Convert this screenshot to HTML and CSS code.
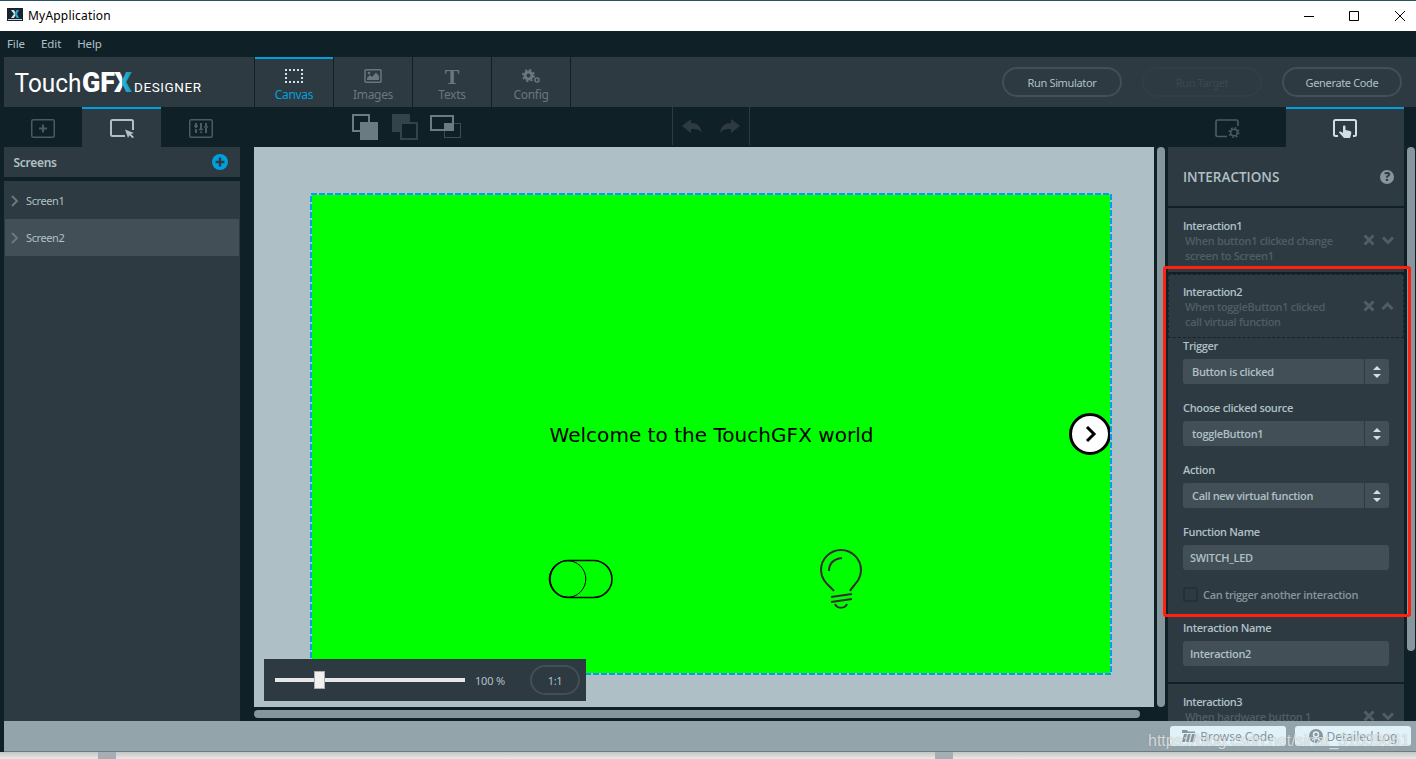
FILE: index.html
```html
<!DOCTYPE html>
<html lang="en">
<head>
    <meta charset="UTF-8">
    <meta name="viewport" content="width=device-width, initial-scale=1.0">
    <title>MyApplication</title>
    <link rel="stylesheet" href="styles.css">
</head>
<body>
    <div class="window">
        <header class="titlebar">
            <svg class="app-icon" width="16" height="15" viewBox="0 0 16 15">
                <rect width="16" height="13" fill="#14252d"/>
                <path d="M1 11.5h14" stroke="#c9d5da"/>
                <path d="M4 2l3 4-3 4h3l2-4-2-4z" fill="#dce5e8"/>
                <path d="M12 2H9.500L7.500 6l2 4H12L10 6z" fill="#2aa5cc"/>
            </svg>
            <span class="app-title">MyApplication</span>
            <svg class="window-buttons" width="104" height="12" viewBox="0 0 104 12" fill="none" stroke="#000">
                <path d="M0 6.500h10M45.500 1.500h9v9h-9zM91 1l10 10M101 1L91 11"/>
            </svg>
        </header>

        <nav class="menu">
            <span>File</span>
            <span>Edit</span>
            <span>Help</span>
        </nav>

        <div class="toolbar">
            <div class="logo">
                <svg width="200" height="50" viewBox="0 0 200 50">
                    <defs>
                        <linearGradient id="logoX" x1="0" x2="1" y1="0" y2="0">
                            <stop offset="0.45" stop-color="#fff"/>
                            <stop offset="0.45" stop-color="#2db4d8"/>
                            <stop offset="1" stop-color="#1594b8"/>
                        </linearGradient>
                    </defs>
                    <text class="logo-light" x="10.500" y="35" textLength="67" lengthAdjust="spacingAndGlyphs">Touch</text>
                    <text class="logo-bold" x="78" y="35" textLength="33" lengthAdjust="spacingAndGlyphs">GF</text>
                    <text class="logo-bold" x="110" y="35" textLength="18" lengthAdjust="spacingAndGlyphs" fill="url(#logoX)">X</text>
                    <text class="logo-small" x="130" y="35" textLength="67">DESIGNER</text>
                </svg>
            </div>
            <div class="tab active">
                <svg width="18" height="14" viewBox="0 0 18 14" fill="none" stroke="#d5e3e9" stroke-width="2" stroke-dasharray="2 2">
                    <path d="M0 1h18M0 13h18M1 4v8M17 4v8"/>
                </svg>
                <span>Canvas</span>
            </div>
            <div class="tab">
                <svg width="18" height="14" viewBox="0 0 18 14">
                    <rect x="1" y=".75" width="16" height="12.500" rx="1" fill="none" stroke="#69777e" stroke-width="1.500"/>
                    <path d="M3 11V9l3-3 2 2 4-4.500L15 7v4z" fill="#69777e"/>
                    <circle cx="5" cy="4" r="1.300" fill="#69777e"/>
                </svg>
                <span>Images</span>
            </div>
            <div class="tab">
                <span class="glyph-t">T</span>
                <span>Texts</span>
            </div>
            <div class="tab">
                <svg width="18" height="14" viewBox="0 0 18 14" fill="none" stroke="#69777e">
                    <circle cx="6.500" cy="6.500" r="3.500" stroke-width="3"/>
                    <circle cx="6.500" cy="6.500" r="5.600" stroke-width="1.800" stroke-dasharray="2.200 2.200"/>
                    <circle cx="15" cy="11" r="2" stroke-width="1.600"/>
                </svg>
                <span>Config</span>
            </div>
            <div class="actions">
                <button>Run Simulator</button>
                <button class="disabled">Run Target</button>
                <button>Generate Code</button>
            </div>
        </div>

        <div class="subbar">
            <div class="panel-tabs left">
                <div class="panel-tab">
                    <svg width="24" height="19" viewBox="0 0 24 19" fill="none" stroke="#4c5b62">
                        <rect x=".75" y=".75" width="22.500" height="17.500" rx="1.500" stroke-width="1.500"/>
                        <path d="M8 9.500h8M12 5.500v8" stroke-width="2"/>
                    </svg>
                </div>
                <div class="panel-tab active">
                    <svg width="24" height="19" viewBox="0 0 24 19">
                        <path d="M15 17H2.500A1.500 1.500 0 0 1 1 15.500V2.500A1.500 1.500 0 0 1 2.500 1h19A1.500 1.500 0 0 1 23 2.500V11" fill="none" stroke="#b0c0c7" stroke-width="2"/>
                        <path d="M15 10.500l9 3.500-3 1 3 3-1.500 1.300-3-3-1.500 2.700z" fill="#b0c0c7"/>
                    </svg>
                </div>
                <div class="panel-tab">
                    <svg width="24" height="19" viewBox="0 0 24 19" fill="none" stroke="#4c5b62">
                        <rect x=".75" y=".75" width="22.500" height="17.500" rx="1.500" stroke-width="1.500"/>
                        <path d="M7 4v5M7 10v4M12 4v7M12 12.500v1.500M17 4v3.500M17 9v5" stroke-width="2"/>
                        <path d="M5 7h4M10 10.500h4M15 8h4" stroke-width="1.500"/>
                    </svg>
                </div>
            </div>
            <div class="edit-tools">
                <svg width="26" height="26" viewBox="0 0 26 26">
                    <rect x="1" y="1" width="16" height="16" fill="none" stroke="#6b7b83" stroke-width="2"/>
                    <rect x="8" y="8" width="18" height="18" fill="#6b7b83"/>
                </svg>
                <svg width="26" height="26" viewBox="0 0 26 26">
                    <rect width="18" height="18" fill="#33434a"/>
                    <rect x="9" y="9" width="16" height="16" fill="#102027" stroke="#33434a" stroke-width="2"/>
                </svg>
                <svg width="32" height="26" viewBox="0 0 32 26">
                    <rect x="1" y="2" width="22" height="14" fill="none" stroke="#6b7b83" stroke-width="2"/>
                    <rect x="14" y="9" width="9" height="7" fill="#6b7b83"/>
                    <rect x="14.500" y="9.500" width="16" height="14" fill="none" stroke="#6b7b83" stroke-dasharray="1 1"/>
                </svg>
            </div>
            <div class="history">
                <svg width="20" height="15" viewBox="0 0 20 15"><path d="M0 7L9 0v4c6 0 10 3 11 10-3-4-6-4-11-4v4z"/></svg>
                <svg width="20" height="15" viewBox="0 0 20 15"><path d="M20 7L11 0v4C5 4 1 7 0 14c3-4 6-4 11-4v4z"/></svg>
            </div>
            <div class="panel-tabs right">
                <div class="panel-tab">
                    <svg width="25" height="19" viewBox="0 0 25 19" fill="none" stroke="#4c5b62">
                        <path d="M12 17.500H2.500A1.500 1.500 0 0 1 1 16V2.500A1.500 1.500 0 0 1 2.500 1h19A1.500 1.500 0 0 1 23 2.500V7" stroke-width="1.700"/>
                        <circle cx="19" cy="13.500" r="3.300" stroke-width="1.500"/>
                        <circle cx="19" cy="13.500" r="4.800" stroke-width="1.500" stroke-dasharray="1.900 1.870"/>
                    </svg>
                </div>
                <div class="panel-tab active">
                    <svg width="24" height="19" viewBox="0 0 24 19">
                        <path d="M5 17H2.500A1.500 1.500 0 0 1 1 15.500V2.500A1.500 1.500 0 0 1 2.500 1h19A1.500 1.500 0 0 1 23 2.500v13a1.500 1.500 0 0 1-1.500 1.500H20" fill="none" stroke="#d0dfe5" stroke-width="2"/>
                        <path d="M10 7.500c0-1.500 2.500-1.500 2.500 0V11l4.500 1c1.500.4 1.500 2 1 3.500L17 19h-6l-5-5.500c.5-1.500 2-1 4 .5z" fill="#d0dfe5"/>
                    </svg>
                </div>
            </div>
        </div>

        <main class="workspace">
            <aside class="screens">
                <div class="screens-header">
                    <h2>Screens</h2>
                    <svg width="16" height="16" viewBox="0 0 16 16">
                        <circle cx="8" cy="8" r="8" fill="#00a0df"/>
                        <path d="M3.500 8h9M8 3.500v9" stroke="#2d3a41" stroke-width="2.400"/>
                    </svg>
                </div>
                <div class="screen-list">
                    <div class="screen-item">
                        <svg width="8" height="12" viewBox="0 0 8 12"><path d="M1 1l5 5-5 5"/></svg>
                        <span>Screen1</span>
                    </div>
                    <div class="screen-item selected">
                        <svg width="8" height="12" viewBox="0 0 8 12"><path d="M1 1l5 5-5 5"/></svg>
                        <span>Screen2</span>
                    </div>
                </div>
            </aside>

            <section class="editor">
                <div class="canvas">
                    <svg class="design" width="802" height="482" viewBox="0 0 802 482">
                        <rect width="802" height="482" fill="#0f0"/>
                        <text class="welcome" x="239.500" y="248.500" textLength="324">Welcome to the TouchGFX world</text>
                        <!-- toggle button -->
                        <g fill="none" stroke="#000">
                            <rect x="240" y="367.500" width="62" height="37" rx="18.500" stroke-width="1.600"/>
                            <circle cx="257.500" cy="386" r="18.300"/>
                        </g>
                        <!-- bulb -->
                        <g fill="none" stroke="#3a2b33" stroke-width="2">
                            <path d="M524 398c-4-5-13-10-13-21a20 20 0 0 1 40 0c0 11-8 15-11 21"/>
                            <path d="M519 378c0-8 5-12 13-13M521 404l21-3M521 409l21-3M525 411c2 5 10 5 12 0"/>
                        </g>
                        <circle cx="780" cy="241" r="19.500" fill="#fff" stroke="#000" stroke-width="3"/>
                        <path d="M777 234l7 7-7 7" fill="none" stroke="#000" stroke-width="3"/>
                        <rect x="1" y="1" width="800" height="480" fill="none" stroke="#b0c0c7" stroke-width="2"/>
                        <rect x="1" y="1" width="800" height="480" fill="none" stroke="#00a0f0" stroke-width="2" stroke-dasharray="6 2"/>
                    </svg>
                    <div class="zoom-box">
                        <div class="slider"><div class="thumb"></div></div>
                        <span class="percent">100 %</span>
                        <button>1:1</button>
                    </div>
                </div>
                <div class="scroll-h"></div>
            </section>
            <div class="scroll-v"></div>

            <aside class="interactions">
                <div class="interactions-header">
                    <h1>INTERACTIONS</h1>
                    <span class="help">?</span>
                </div>
                <div class="interaction">
                    <div class="summary">
                        <div>
                            <h3>Interaction1</h3>
                            <p>When button1 clicked change<br>screen to Screen1</p>
                        </div>
                        <svg width="32" height="12" viewBox="0 0 32 12"><path d="M1.500 1.500l9 9M10.500 1.500l-9 9M20 3.500l5 5 5-5"/></svg>
                    </div>
                </div>
                <div class="interaction">
                    <div class="summary open">
                        <div>
                            <h3>Interaction2</h3>
                            <p>When toggleButton1 clicked<br>call virtual function</p>
                        </div>
                        <svg width="32" height="12" viewBox="0 0 32 12"><path d="M1.500 1.500l9 9M10.500 1.500l-9 9M19.500 9l5-5 5 5"/></svg>
                    </div>
                    <div class="form">
                        <label>Trigger</label>
                        <div class="select">
                            <span>Button is clicked</span>
                            <svg width="8" height="12" viewBox="0 0 8 12"><path d="M0 4l4-4 4 4zM0 8l4 4 4-4z"/></svg>
                        </div>
                        <label>Choose clicked source</label>
                        <div class="select">
                            <span>toggleButton1</span>
                            <svg width="8" height="12" viewBox="0 0 8 12"><path d="M0 4l4-4 4 4zM0 8l4 4 4-4z"/></svg>
                        </div>
                        <label>Action</label>
                        <div class="select">
                            <span>Call new virtual function</span>
                            <svg width="8" height="12" viewBox="0 0 8 12"><path d="M0 4l4-4 4 4zM0 8l4 4 4-4z"/></svg>
                        </div>
                        <label>Function Name</label>
                        <div class="field">SWITCH_LED</div>
                        <div class="check"><i></i><span>Can trigger another interaction</span></div>
                        <label>Interaction Name</label>
                        <div class="field">Interaction2</div>
                    </div>
                </div>
                <div class="interaction">
                    <div class="summary">
                        <div>
                            <h3>Interaction3</h3>
                            <p>When hardware button 1</p>
                        </div>
                        <svg width="32" height="12" viewBox="0 0 32 12"><path d="M1.500 1.500l9 9M10.500 1.500l-9 9M20 3.500l5 5 5-5"/></svg>
                    </div>
                </div>
            </aside>
            <div class="scroll-v short"></div>
        </main>

        <footer class="statusbar">
            <div class="status-btn">
                <svg width="14" height="12" viewBox="0 0 14 12" fill="#87959c">
                    <path d="M0 0h5l1 1.500h7V3H0zM2 4h3L3 12H0zM6 4h3l-2 8H4zM10 4h4l-2 8H8z"/>
                </svg>
                <span>Browse Code</span>
            </div>
            <div class="status-btn">
                <svg width="14" height="14" viewBox="0 0 14 14">
                    <circle cx="7" cy="7" r="7" fill="#87959c"/>
                    <circle cx="7" cy="5.500" r="2.500" fill="none" stroke="#e2f2f9" stroke-width="1.500"/>
                    <path d="M3 11c2-2 6-2 8 0" fill="none" stroke="#e2f2f9" stroke-width="1.300"/>
                </svg>
                <span>Detailed Log</span>
            </div>
        </footer>
        <div class="desktop"><i></i><i></i></div>

        <div class="highlight"></div>
        <div class="watermark">https://blog.csdn.net/sinat_31039061</div>
    </div>
</body>
</html>
```
FILE: styles.css
```css
* {
    box-sizing: border-box;
    margin: 0;
    padding: 0;
}

body {
    width: 1416px;
    height: 759px;
    overflow: hidden;
    background-color: #102027;
    color: #b0c0c7;
    font-family: "Noto Sans", sans-serif;
    font-size: 11px;
}

svg {
    display: block;
    flex-shrink: 0;
}

button {
    font-family: inherit;
    font-size: 11px;
    letter-spacing: -0.35px;
    color: #b0c0c7;
    background: none;
    border: 2px solid #424f56;
    border-radius: 15px;
    height: 30px;
}

.window {
    position: relative;
    display: flex;
    flex-direction: column;
    height: 759px;
}

/* title and menu */
.titlebar {
    display: flex;
    align-items: center;
    height: 31px;
    padding: 0 8px 1px 7px;
    background-color: #fff;
    border-top: 1px solid #2b5262;
}

.app-title {
    margin-left: 5px;
    font-size: 12px;
    letter-spacing: 0.2px;
    color: #000;
}

.window-buttons {
    margin-left: auto;
}

.menu {
    display: flex;
    align-items: center;
    gap: 16px;
    height: 26px;
    padding: 0 0 2px 7px;
    font-size: 11.5px;
    letter-spacing: -0.1px;
}

/* toolbar */
.toolbar {
    display: flex;
    gap: 1px;
    height: 50px;
    margin-left: 4px;
}

.logo {
    width: 250px;
    background-color: #2d3a41;
}

.logo text {
    font-family: Roboto, sans-serif;
    fill: #fff;
}

.logo .logo-light {
    font-size: 26px;
}

.logo .logo-bold {
    font-size: 27px;
    font-weight: 900;
}

.logo .logo-bold[fill] {
    fill: url(#logoX);
}

.logo .logo-small {
    font-size: 13.5px;
}

.tab {
    display: flex;
    flex-direction: column;
    align-items: center;
    width: 78px;
    padding-top: 12px;
    background-color: #2d3a41;
    color: #69777e;
    font-size: 12px;
    letter-spacing: -0.3px;
    line-height: 16px;
}

.tab svg {
    margin-bottom: 4px;
}

.tab.active {
    padding-top: 10px;
    border-top: 2px solid #00a0df;
    color: #00a0df;
}

.glyph-t {
    height: 18px;
    font-family: "Liberation Serif", serif;
    font-size: 22px;
    font-weight: bold;
    line-height: 15px;
}

.actions {
    flex: 1;
    display: flex;
    align-items: center;
    justify-content: flex-end;
    gap: 20px;
    padding-right: 14px;
    background-color: #2d3a41;
}

.actions button {
    width: 120px;
}

.actions .disabled {
    color: #394950;
    border-color: #303e45;
}

/* second bar */
.subbar {
    display: flex;
    height: 40px;
    padding-left: 4px;
}

.panel-tabs {
    display: flex;
    width: 236px;
}

.panel-tabs.right {
    margin-left: auto;
    margin-right: 12px;
}

.panel-tab {
    flex: 1;
    display: flex;
    justify-content: center;
    padding-top: 12px;
}

.panel-tab.active {
    padding-top: 10px;
    background-color: #2d3a41;
    border-top: 2px solid #00a0df;
}

.left .panel-tab:first-child {
    flex: 0 0 78px;
}

.edit-tools {
    display: flex;
    gap: 14px;
    width: 320px;
    margin-left: 112px;
    padding-top: 7px;
}

.edit-tools svg:last-child {
    margin-left: -2px;
}

.history {
    display: flex;
    gap: 18px;
    width: 78px;
    height: 38px;
    padding: 12px 0 0 9px;
    border-left: 1px solid #2d3a41;
    border-right: 1px solid #2d3a41;
}

.history svg {
    fill: #2d3a41;
}

/* workspace */
.workspace {
    display: flex;
    height: 574px;
    padding-left: 4px;
    overflow: hidden;
}

.workspace > * {
    flex-shrink: 0;
}

.screens {
    display: flex;
    flex-direction: column;
    width: 236px;
}

.screens-header {
    display: flex;
    align-items: center;
    justify-content: space-between;
    height: 30px;
    margin-bottom: 4px;
    padding: 0 12px 0 9.5px;
    background-color: #2d3a41;
}

.screens-header h2 {
    font-size: 12px;
    font-weight: 600;
    letter-spacing: -0.3px;
}

.screen-list {
    flex: 1;
    padding: 1px;
    background-color: #2d3a41;
}

.screen-item {
    display: flex;
    align-items: center;
    gap: 7px;
    height: 37px;
    padding-left: 6px;
    letter-spacing: -0.4px;
}

.screen-item.selected {
    background-color: #424f56;
}

.screen-item path {
    fill: none;
    stroke: #69777e;
    stroke-width: 2;
}

.editor {
    width: 900px;
    margin-left: 14px;
}

.canvas {
    position: relative;
    height: 560px;
    padding: 46px 0 0 56px;
    background-color: #afbfc6;
}

.welcome {
    font-family: "DejaVu Sans", sans-serif;
    font-size: 20px;
}

.zoom-box {
    position: absolute;
    left: 10px;
    bottom: 6px;
    display: flex;
    align-items: center;
    width: 322px;
    height: 42px;
    padding: 0 6px 0 11px;
    background-color: #2d3a41;
}

.zoom-box button {
    width: 50px;
    margin-left: auto;
}

.slider {
    display: flex;
    align-items: center;
    width: 190px;
    height: 4px;
    padding-left: 39px;
    background-color: #e7e7e7;
}

.thumb {
    width: 11px;
    height: 18px;
    flex-shrink: 0;
    background-color: #f0f0f0;
    border: 1px solid #acacac;
}

.percent {
    margin-left: 10px;
    letter-spacing: -0.2px;
}

.scroll-h {
    width: 886px;
    height: 8px;
    margin-top: 3px;
    border-radius: 4px;
    background-color: #87959c;
}

.scroll-v {
    width: 8px;
    height: 560px;
    margin: 0 3px;
    border-radius: 4px;
    background-color: #87959c;
}

.scroll-v.short {
    height: 504px;
}

/* interactions panel */
.interactions {
    display: flex;
    flex-direction: column;
    gap: 2px;
    width: 236px;
    font-family: "Open Sans", "Noto Sans", sans-serif;
    font-weight: 600;
    letter-spacing: -0.33px;
}

.interactions-header {
    display: flex;
    align-items: center;
    justify-content: space-between;
    flex-shrink: 0;
    height: 59px;
    padding: 0 10px 0 15px;
    background-color: #2d3a41;
}

.interactions-header h1 {
    font-size: 13.5px;
    font-weight: 600;
    letter-spacing: 0;
}

.help {
    width: 14px;
    height: 14px;
    border-radius: 50%;
    background-color: #87959c;
    color: #2d3a41;
    font-size: 12px;
    font-weight: 800;
    line-height: 14px;
    text-align: center;
}

.interaction {
    flex-shrink: 0;
    background-color: #2d3a41;
}

.summary {
    display: flex;
    justify-content: space-between;
    height: 64px;
    padding: 9px 9px 0 14px;
    border: 1px solid transparent;
    line-height: 15px;
}

.summary.open {
    border: 1px dashed #14242b;
}

.summary h3 {
    font-size: 11px;
    font-weight: 600;
    letter-spacing: -0.5px;
}

.summary p {
    padding-left: 2px;
    color: #4f5e65;
}

.summary svg {
    margin: 16px -1px 0 0;
}

.summary path {
    fill: none;
    stroke: #4f5e65;
    stroke-width: 3;
}

.form {
    height: 344px;
    padding: 0 15px;
}

.form label {
    display: block;
    line-height: 15px;
    margin-bottom: 6px;
}

.select, .field {
    height: 25px;
    margin-bottom: 16px;
    border-radius: 3px;
    background-color: #424f56;
    line-height: 25px;
}

.field {
    padding-left: 7px;
}

.select {
    display: flex;
    align-items: center;
    padding: 0 8px 0 9px;
    background: linear-gradient(to right, #424f56 181px, #2d3a41 181px, #2d3a41 182px, #424f56 182px);
}

.select svg {
    margin-left: auto;
    fill: #d0dfe5;
}

.check {
    display: flex;
    align-items: center;
    gap: 5px;
    height: 15px;
    margin: 17px 0 18px;
    color: #87959c;
}

.check i {
    width: 15px;
    height: 15px;
    border: 2px solid #233138;
    border-radius: 2px;
}

/* bottom */
.statusbar {
    display: flex;
    align-items: flex-start;
    justify-content: flex-end;
    gap: 9px;
    height: 31px;
    margin-left: 4px;
    padding: 5px 5px 0 0;
    background-color: #94a4ab;
    border-bottom: 1px solid #6e7a80;
}

.status-btn {
    display: flex;
    align-items: center;
    justify-content: center;
    gap: 4px;
    width: 116px;
    height: 20px;
    border-radius: 3px;
    background-color: #e2f2f9;
    color: #87959c;
    font-size: 12px;
}

.desktop {
    display: flex;
    height: 7px;
    padding-left: 98px;
    overflow: hidden;
    background: linear-gradient(#c6c6c6, #e8e8e8);
}

.desktop i {
    flex: 0 0 18px;
    height: 7px;
    margin-right: 819px;
    background-color: #a5adb5;
}

.highlight {
    position: absolute;
    left: 1163px;
    top: 266px;
    width: 248px;
    height: 351px;
    border: 3px solid #ff2010;
    border-radius: 3px;
}

.watermark {
    position: absolute;
    left: 1148px;
    top: 732px;
    color: rgba(255, 255, 255, 0.7);
    font-family: "Liberation Sans", sans-serif;
    font-size: 16px;
    line-height: 18px;
    text-shadow: 0 0 1px rgba(80, 90, 95, 0.5);
}
```
